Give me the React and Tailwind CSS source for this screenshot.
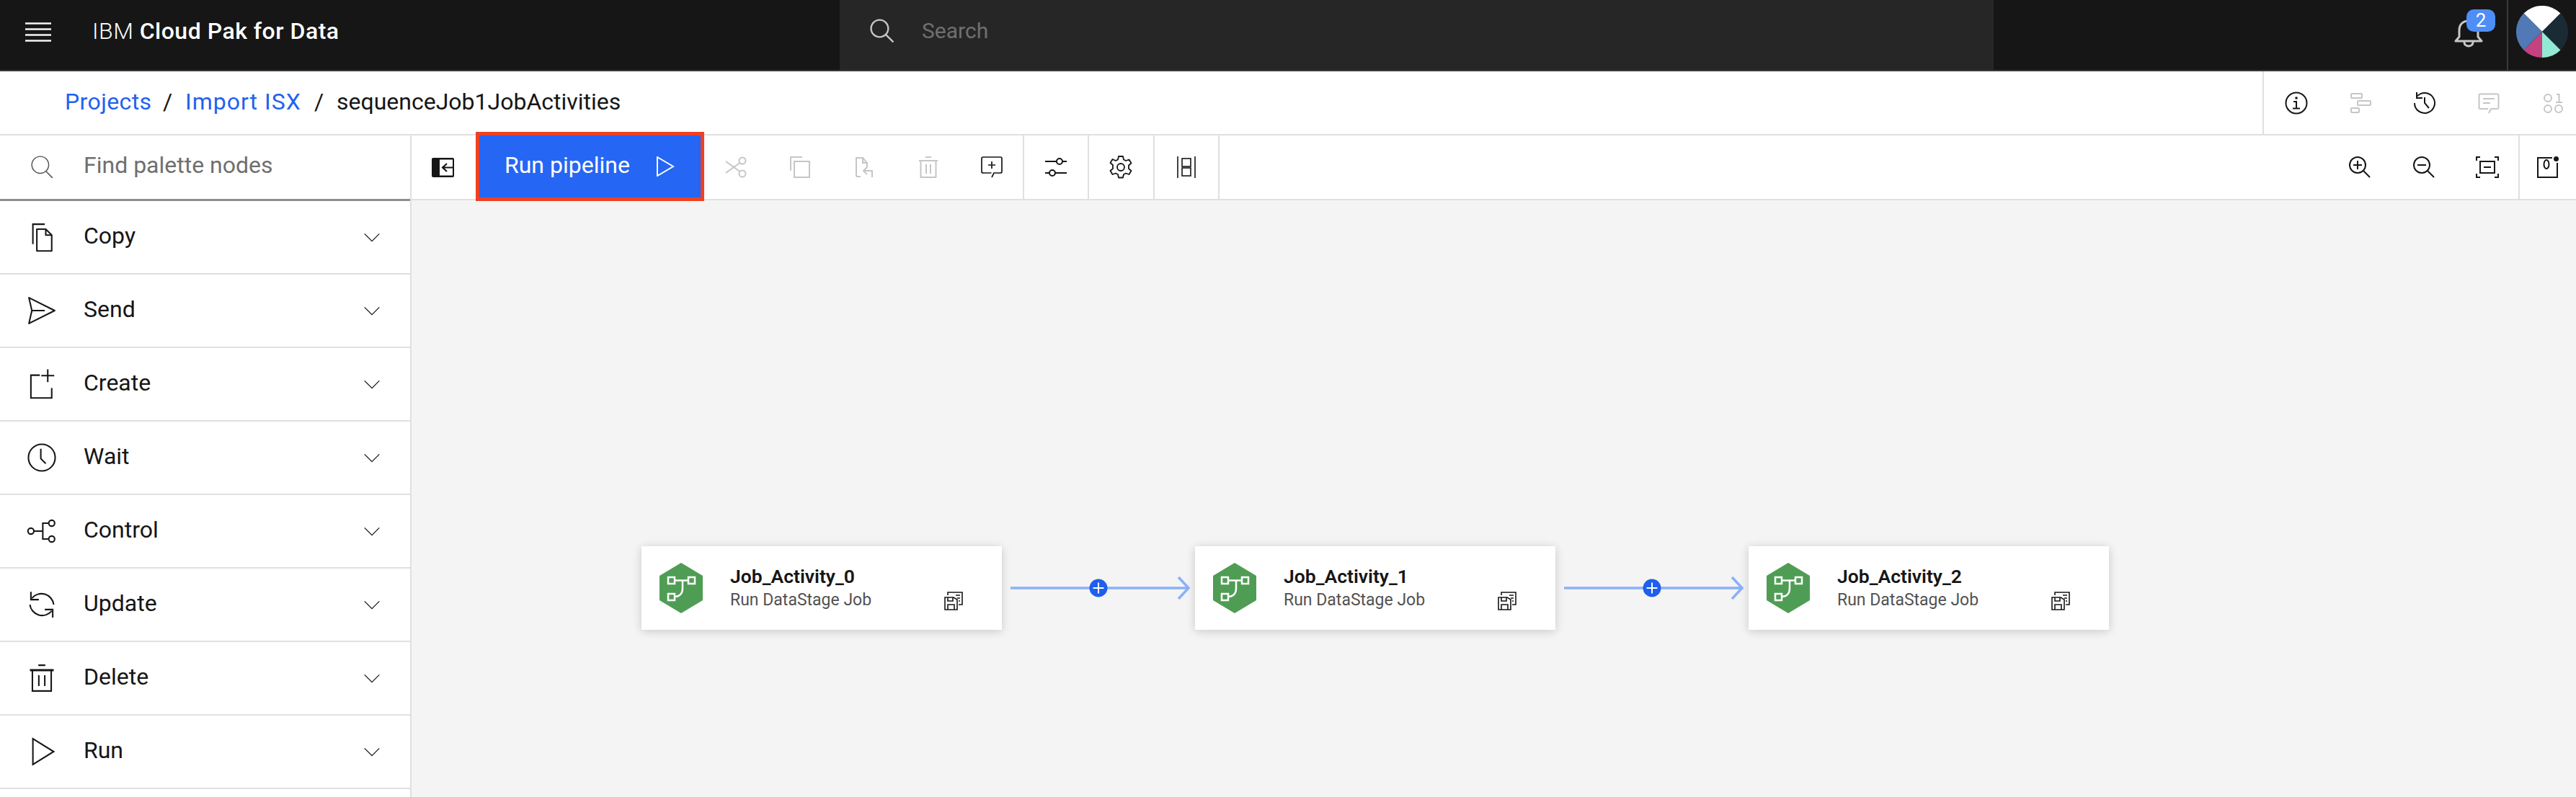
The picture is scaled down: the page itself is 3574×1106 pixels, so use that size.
const F = { fontFamily: '"Roboto","Noto Sans",sans-serif' };

function I({ children, size = 32, className = "", sw = 2 }) {
  return (
    <svg width={size} height={size} viewBox="0 0 32 32" fill="none" stroke="currentColor" strokeWidth={sw} className={"shrink-0 " + className}>
      {children}
    </svg>
  );
}

const CopyFile = () => (
  <I size={44} sw={1.5}><path d="M7 23V3h12" /><path d="M11 30V8h9l6 6v16z M20 8v6h6" strokeLinejoin="round" /></I>
);
const Send = () => (
  <I size={44} sw={1.5}><path d="M3 3l26 13L3 29l3-13z M6 16h13" strokeLinejoin="round" /></I>
);
const Create = () => (
  <I size={44} sw={1.5}><path d="M14 7H5v23h21V20" /><path d="M22 1v13M15.500 7.500h13" /></I>
);
const Clock = () => (
  <I size={44} sw={1.5}><circle cx="16" cy="16" r="13.500" /><path d="M15 7v10l5 5" /></I>
);
const Control = () => (
  <I size={44} sw={1.5}><circle cx="5" cy="16" r="3" /><circle cx="26" cy="8" r="3" /><circle cx="26" cy="24" r="3" /><path d="M8 16h9M23 8h-6v16h6" /></I>
);
const Update = () => (
  <I size={44} sw={1.5}><path d="M6 9.500A12.500 12.500 0 0 1 28 16" /><path d="M5 3v8h8" /><path d="M26 22.500A12.500 12.500 0 0 1 4 16" /><path d="M27 29v-8h-8" /></I>
);
const Trash = () => (
  <I size={44} sw={1.5}><path d="M4 8h24" strokeWidth="2.200" /><path d="M6.500 8v21h19V8" /><path d="M13 13v11M19 13v11M12.500 3h7" /></I>
);
const Play = () => (
  <I size={44} sw={1.5}><path d="M7 3l21 13L7 29z" /></I>
);
const Chevron = () => (
  <I size={30} sw={1.3}><path d="M5 11l11 11 11-11" /></I>
);

const rows = [
  ["Copy", CopyFile],
  ["Send", Send],
  ["Create", Create],
  ["Wait", Clock],
  ["Control", Control],
  ["Update", Update],
  ["Delete", Trash],
  ["Run", Play],
];

function Tool({ children, dim, sep, w = "w-[89px]" }) {
  return (
    <div className={w + " h-full flex items-center justify-center shrink-0 " + (dim ? "text-[#c6c6c6] " : "text-[#161616] ") + (sep ? "border-r-2 border-[#e0e0e0]" : "")}>
      {children}
    </div>
  );
}

function Hex() {
  return (
    <svg width="62" height="70" viewBox="0 0 62 70" className="shrink-0">
      <path d="M31 0l30 18v34L31 70 1 52V18z" fill="#4f9d54" />
      <g fill="none" stroke="#fff" strokeWidth="2.500">
        <rect x="13" y="20" width="9" height="9" />
        <rect x="41" y="20" width="9" height="9" />
        <rect x="13" y="43" width="9" height="9" />
        <path d="M22 24.500h19M33 24.500v11c0 7-4 11.500-11 11.500" />
      </g>
    </svg>
  );
}

function Disk() {
  return (
    <svg width="26" height="26" viewBox="0 0 26 26" fill="none" stroke="#161616" strokeWidth="1.600" className="shrink-0">
      <path d="M5 5V1h20v17h-5" />
      <path d="M1 25V8h12l5 3v14z" />
      <path d="M5 8v5h7V8M5 25v-7h9v7" />
      <path d="M16 5h6M18 9h4M20 13h2" />
    </svg>
  );
}

function Node({ left, name }) {
  return (
    <div className="absolute top-[480px] w-[500px] h-[116px] bg-white shadow-[0_2px_12px_rgba(0,0,0,0.18)] flex items-center" style={{ left }}>
      <div className="ml-[24px]"><Hex /></div>
      <div className="ml-[37px] flex flex-col">
        <span className="text-[26.500px] leading-[33px] font-semibold text-[#161616]">{name}</span>
        <span className="text-[23px] leading-[33px] text-[#525252]">Run DataStage Job</span>
      </div>
      <div className="absolute left-[420px] top-[63px]"><Disk /></div>
    </div>
  );
}

function Link({ left }) {
  return (
    <svg width="250" height="40" viewBox="0 0 250 40" className="absolute top-[518px]" style={{ left }}>
      <path d="M1 20h246M234 5l14 15-14 15" fill="none" stroke="#8ab0fb" strokeWidth="3.500" />
      <circle cx="123" cy="20" r="12.500" fill="#1f5fed" />
      <path d="M123 12.500v15M115.500 20h15" stroke="#fff" strokeWidth="2" />
    </svg>
  );
}

export default function App() {
  return (
    <div className="w-[3574px] h-[1106px] overflow-hidden flex flex-col bg-white" style={F}>
      {/* Header */}
      <header className="h-[99px] shrink-0 bg-[#161616] border-b-2 border-[#393939] flex items-stretch text-white">
        <div className="w-[128px] flex items-center pl-[35px] shrink-0">
          <svg width="36" height="27" viewBox="0 0 36 27" className="mt-[-8px]" fill="none" stroke="#f4f4f4" strokeWidth="2.500">
            <path d="M0 1.500h36M0 9.500h36M0 17.500h36M0 25.500h36" />
          </svg>
        </div>
        <div className="w-[1037px] shrink-0 flex items-center text-[32px] tracking-[0.5px] pb-[12px]">
          <span className="font-light">IBM&nbsp;</span><span className="font-medium">Cloud Pak for Data</span>
        </div>
        <div className="w-[1601px] shrink-0 bg-[#262626] flex items-center pl-[40px] pb-[12px]">
          <svg width="38" height="38" viewBox="0 0 32 32" fill="none" stroke="#c6c6c6" strokeWidth="2">
            <circle cx="13" cy="13" r="10" /><path d="M20.500 20.500L29 29" />
          </svg>
          <span className="ml-[36px] text-[30px] text-[#6f6f6f]">Search</span>
        </div>
        <div className="flex-1 flex items-stretch justify-end">
          <div className="relative w-[712px] flex">
            <div className="absolute left-[639px] top-[27px] text-[#c6c6c6]">
              <svg width="40" height="40" viewBox="0 0 40 40" fill="none" stroke="currentColor" strokeWidth="3">
                <path d="M2 30l5-6V15C7 7 12 2 20 2s13 5 13 13v9l5 6zM14 30v2c0 3 3 5 6 5s6-2 6-5v-2" strokeLinejoin="round" />
              </svg>
            </div>
            <div className="absolute left-[656px] top-[13px] w-[40px] h-[31px] rounded-[10px] bg-[#4f8ef7] text-[26px] flex items-center justify-center text-white">2</div>
          </div>
          <div className="w-[96px] shrink-0 border-l-2 border-[#393939] flex items-center justify-center pb-[10px]">
            <svg width="72" height="72" viewBox="-36 -36 72 72">
              <path d="M0 0L-25.500 -25.500A36 36 0 0 1 25.500 -25.500Z" fill="#ffffff" />
              <path d="M0 0L25.500 -25.500A36 36 0 0 1 25.500 25.500Z" fill="#1a2b36" />
              <path d="M0 0L25.500 25.500A36 36 0 0 1 0 36Z" fill="#92ead5" />
              <path d="M0 0L0 36A36 36 0 0 1 -25.500 25.500Z" fill="#c5417f" />
              <path d="M0 0L-25.500 25.500A36 36 0 0 1 -25.500 -25.500Z" fill="#5079b5" />
            </svg>
          </div>
        </div>
      </header>

      {/* Breadcrumb */}
      <div className="h-[89px] shrink-0 border-b-2 border-[#e0e0e0] flex items-center">
        <div className="flex items-center text-[32px] pl-[90px] flex-1 text-[#161616] pb-[4px]">
          <span className="text-[#1f62f0] w-[118px] tracking-[0.4px]">Projects</span>
          <span className="w-[49px] text-center">/</span>
          <span className="text-[#1f62f0] w-[161px] tracking-[1px]">Import ISX</span>
          <span className="w-[49px] text-center">/</span>
          <span>sequenceJob1JobActivities</span>
        </div>
        <div className="h-full w-[435px] border-l-2 border-[#e0e0e0] flex items-center">
          <Tool><I><circle cx="16" cy="16" r="14.500" /><circle cx="16" cy="9" r="1.800" fill="currentColor" stroke="none" /><path d="M12 14h4v9M11 23.500h10" /></I></Tool>
          <Tool dim><I><rect x="3" y="3" width="15" height="6" rx="1" /><rect x="12" y="13" width="18" height="6" rx="1" /><rect x="3" y="23" width="11" height="6" rx="1" /></I></Tool>
          <Tool><I><path d="M5.800 6.400A14 14 0 1 1 2 16" /><path d="M5 1v8h8" /><path d="M16 8v8l6 7" /></I></Tool>
          <Tool dim><I><path d="M19 24H28a1.500 1.500 0 0 0 1.500-1.500V5A1.500 1.500 0 0 0 28 3.500H4A1.500 1.500 0 0 0 2.500 5v17.500A1.500 1.500 0 0 0 4 24H15M19 24l-3 6" /><path d="M8 10h16M8 16h10" /></I></Tool>
          <Tool dim><I><circle cx="9" cy="9" r="5" /><circle cx="9" cy="24" r="5" /><circle cx="24" cy="24" r="5" /><path d="M21 4h3.500v11M20 15h9" /></I></Tool>
        </div>
      </div>

      {/* Body */}
      <div className="flex-1 flex min-h-0">
        {/* Palette */}
        <aside className="w-[571px] shrink-0 border-r-2 border-[#e0e0e0] flex flex-col">
          <div className="h-[91px] shrink-0 border-b-[3px] border-[#8d8d8d] flex items-center text-[#525252]">
            <div className="w-[116px] shrink-0 flex justify-center">
              <I size={34} sw={1.4}><circle cx="14" cy="13" r="11" /><path d="M21 21l9 9" /></I>
            </div>
            <span className="text-[32px] text-[#6f6f6f] pb-[6px]">Find palette nodes</span>
          </div>
          {rows.map(([label, Icon]) => (
            <div key={label} className="h-[102px] shrink-0 border-b-2 border-[#e0e0e0] flex items-center text-[#161616]">
              <div className="w-[116px] shrink-0 flex justify-center"><Icon /></div>
              <span className="flex-1 text-[32px] pb-[4px]">{label}</span>
              <div className="mr-[38px]"><Chevron /></div>
            </div>
          ))}
        </aside>

        {/* Canvas column */}
        <div className="flex-1 flex flex-col min-w-0">
          <div className="h-[90px] shrink-0 border-b-2 border-[#e0e0e0] flex items-stretch bg-white">
            <div className="w-[94px] flex items-center pl-[28px] shrink-0">
              <svg width="31" height="27" viewBox="0 0 31 27">
                <rect x="0" y="0" width="31" height="27" rx="2" fill="#161616" />
                <rect x="11" y="2.500" width="18" height="22" fill="#fff" />
                <path d="M29 13.500H16M21 8l-6 5.500 6 5.500" fill="none" stroke="#161616" strokeWidth="2.200" />
              </svg>
            </div>
            <button className="relative z-10 w-[307px] h-[86px] shrink-0 bg-[#2566f5] text-white outline-[5px] outline-[#ee4124] flex items-center text-[32px] pl-[35px]">
              <span className="w-[210px] text-left pb-[4px]">Run pipeline</span>
              <svg width="26" height="28" viewBox="0 0 26 28" fill="none" stroke="#fff" strokeWidth="2"><path d="M2 1l22 13L2 27z" /></svg>
            </button>
            <div className="w-[5px] shrink-0" />
            <Tool dim w="w-[88.800px]"><I><circle cx="25" cy="7" r="4.500" /><circle cx="25" cy="25" r="4.500" /><path d="M21.500 10L2 24M21.500 22L2 8" /></I></Tool>
            <Tool dim w="w-[88.800px]"><I><path d="M3 21V2h16" /><rect x="8" y="8" width="21" height="22" /></I></Tool>
            <Tool dim w="w-[88.800px]"><I><path d="M5 29V3h9l6 7v6M14 3v7h6M5 29h6" /><path d="M27 30v-9H16M20 16l-5 5 5 5" /></I></Tool>
            <Tool dim w="w-[88.800px]"><I><path d="M3 7h26M5.500 7v23h21V7M13 12v13M19 12v13M12 2h8" /></I></Tool>
            <Tool sep w="w-[88.800px]"><I sw={1.7}><path d="M4 2h24a2 2 0 0 1 2 2v18a2 2 0 0 1-2 2H19l-3 6" /><path d="M15.500 24H4a2 2 0 0 1-2-2V4a2 2 0 0 1 2-2" /><path d="M16 8v10M11 13h10" /></I></Tool>
            <Tool sep w="w-[90.300px]"><I><circle cx="21" cy="8" r="4" /><circle cx="11" cy="24" r="4" /><path d="M1 8h16M25 8h6M1 24h6M15 24h16" /></I></Tool>
            <Tool sep w="w-[90.300px]"><I sw={1.8}><path d="M13 1h6l1 4.500 3 1.500 4.500-1.500 3 5-3.500 3v4.500l3.500 3-3 5-4.500-1.500-3 1.500-1 4.500h-6l-1-4.500-3-1.500-4.500 1.500-3-5 3.500-3V13L1.500 10l3-5L9 7l3-1.500z" strokeLinejoin="round" /><circle cx="16" cy="16" r="5" /></I></Tool>
            <Tool sep w="w-[90.300px]"><I sw={1.6}><path d="M4 1v30M28 1v30" /><rect x="10" y="4" width="12" height="11" /><rect x="10" y="17" width="12" height="11" /></I></Tool>
            <div className="flex-1" />
            <Tool><I><circle cx="13" cy="13" r="11" /><path d="M21 21l9 9M13 7v12M7 13h12" /></I></Tool>
            <Tool><I><circle cx="13" cy="13" r="11" /><path d="M21 21l9 9M7 13h12" /></I></Tool>
            <Tool sep><I><path d="M1 7V2h5M26 2h5v5M1 25v5h5M26 30h5v-5" /><rect x="6" y="8" width="20" height="16" /><path d="M11 16h10" /></I></Tool>
            <div className="w-[78px] shrink-0 flex items-center justify-center text-[#161616]">
              <svg width="30" height="30" viewBox="0 0 30 30" fill="none" stroke="currentColor" strokeWidth="2">
                <path d="M21 2H1v27h27V9" />
                <circle cx="26.500" cy="3.500" r="3.500" fill="currentColor" stroke="none" />
                <ellipse cx="13" cy="11" rx="3.500" ry="6" />
              </svg>
            </div>
          </div>
          <div className="flex-1 relative bg-[#f4f4f4]">
            <Node left={319} name="Job_Activity_0" />
            <Node left={1087} name="Job_Activity_1" />
            <Node left={1855} name="Job_Activity_2" />
            <Link left={830} />
            <Link left={1598} />
          </div>
        </div>
      </div>
    </div>
  );
}
